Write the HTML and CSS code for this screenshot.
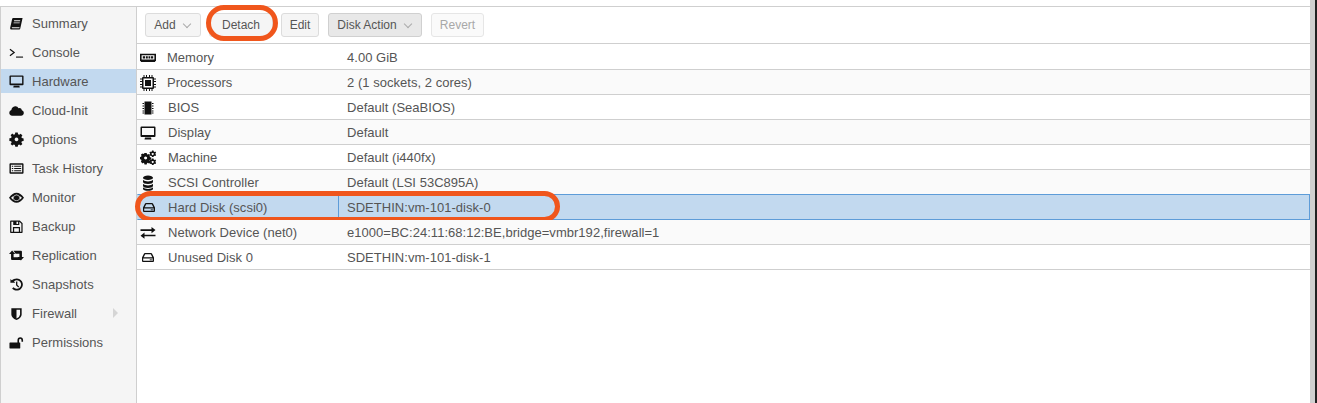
FILE: index.html
```html
<!DOCTYPE html>
<html lang="en">
<head>
<meta charset="utf-8">
<title>Hardware</title>
<link rel="stylesheet" href="styles.css">
</head>
<body>
<div class="page">
  <div class="frame">
    <nav class="side">
      <a class="nav"><svg class="ic" viewBox="0 0 16 16"><path d="M4.500 2h10l-.2 1-2.300 10.400q-.2.900-1.200.900H2.500Q1 14.300 1.200 12.700L3.400 3q.2-1 1.100-1zM5.500 4.500h6.500l-.2 1H5.300zM5 6.800h6.500l-.2 1H4.800zM3 12q-.2 1 .8 1H11l.3-1z" fill-rule="evenodd"/></svg><span>Summary</span></a>
      <a class="nav"><svg class="ic" viewBox="0 0 16 16"><path d="M1 4.500l4.500 3.500L1 11.500" fill="none" stroke="#111" stroke-width="1.300"/><path d="M7.500 12.300h7.500v1.200H7.500z"/></svg><span>Console</span></a>
      <a class="nav sel"><svg class="ic" viewBox="0 0 16 16"><path d="M1.500 1.500h13q1 0 1 1v8.500q0 1-1 1H1.500q-1 0-1-1V2.500q0-1 1-1zM2 3V10h12V3zM5 12.500h6l.5 2h-7z" fill-rule="evenodd"/></svg><span>Hardware</span></a>
      <a class="nav"><svg class="ic" viewBox="0 0 16 16"><path d="M3.500 13.500Q.3 13.500.3 10.500q0-2.300 2.200-3Q3 4 6.500 3.500q2.600-.2 3.700 2 3-.5 3.600 2.200 2 .6 2 2.800 0 3-3 3z"/></svg><span>Cloud-Init</span></a>
      <a class="nav"><svg class="ic" viewBox="0 0 16 16"><path d="M6.700 1.500h2.600l.4 1.900 1.200.5 1.600-1.100 1.800 1.800-1.100 1.600.5 1.200 1.900.4v2.600l-1.900.4-.5 1.200 1.100 1.600-1.800 1.800-1.600-1.100-1.200.5-.4 1.900H6.700l-.4-1.900-1.200-.5-1.600 1.100-1.800-1.800 1.100-1.600-.5-1.200-1.900-.4V7.600l1.900-.4.500-1.200L1.700 4.400l1.800-1.800 1.600 1.100 1.200-.5zM8 6.800a2 2 0 1 0 .01 0z" transform="translate(0 -.9)" fill-rule="evenodd"/></svg><span>Options</span></a>
      <a class="nav"><svg class="ic" viewBox="0 0 16 16"><path d="M1.500 2.500h13q1 0 1 1v9q0 1-1 1h-13q-1 0-1-1v-9q0-1 1-1zM2 4v8h12V4zM3 5h1.500v1.200H3zM5.500 5H13v1.200H5.500zM3 7.400h1.500v1.200H3zM5.500 7.400H13v1.200H5.500zM3 9.800h1.500V11H3zM5.500 9.800H13V11H5.500z" fill-rule="evenodd"/></svg><span>Task History</span></a>
      <a class="nav"><svg class="ic" viewBox="0 0 16 16"><path d="M0 8.300Q3.800 3 8 3t8 5.300Q12.200 13.600 8 13.600T0 8.300zM8 4.900a3.400 3.400 0 1 1-.01 0zM2.200 8.300q1.300 1.500 2.700 2.300-1.500-2.300 0-4.600-1.400.8-2.700 2.300zM11.100 6q1.500 2.300 0 4.600 1.400-.8 2.700-2.300-1.300-1.500-2.700-2.300z" fill-rule="evenodd"/><circle cx="8" cy="8.300" r="2.800"/></svg><span>Monitor</span></a>
      <a class="nav"><svg class="ic" viewBox="0 0 16 16"><path d="M2 1.500h9.500l3 3V14q0 .8-.8.800H2q-.8 0-.8-.8V2.300q0-.8.800-.8zM2.500 2.800v10.700h1.700V8.500h7.600v5h1.400V5L11 2.800v3.700H4.500V2.800zM5.500 9.800v3.700h5V9.800zM8 3v2.300h1.700V3z" fill-rule="evenodd"/></svg><span>Backup</span></a>
      <a class="nav"><svg class="ic" viewBox="0 0 16 16"><path d="M3.300 2.600 6.700 6.500H4.900v3.300H10l2.200 3H3.200q-1 0-1-1V6.500H0zM4.800 3h8q1 0 1 1v5.500H16l-3.300 3.900-3.400-3.900h1.800V6.100H7.100z"/></svg><span>Replication</span></a>
      <a class="nav"><svg class="ic" viewBox="0 0 16 16"><path d="M1.500 2.200l1.300 1.300Q5 1.500 8.300 1.500a6.500 6.500 0 1 1-5 10.700l1.500-1.400a4.500 4.500 0 1 0 .5-6l1.400 1.400H1.500zM7.500 4.800h1.400v3.500l2 2-1 1-2.400-2.400z" fill-rule="evenodd"/></svg><span>Snapshots</span></a>
      <a class="nav"><svg class="ic" viewBox="0 0 16 16"><path d="M2.500 2.500h11v6.500q0 3.500-5.500 6-5.500-2.500-5.500-6zM8 4v9.300q3.800-2 3.800-4.300V4z" fill-rule="evenodd"/></svg><span>Firewall</span><i class="arrow"></i></a>
      <a class="nav"><svg class="ic" viewBox="0 0 16 16"><path d="M1 8h8V5.500Q9 2.300 12 2.300t3 3.200v1.800h-1.700V5.500q0-1.600-1.300-1.600t-1.300 1.600V8h.8q.5 0 .5.500v5.300q0 .5-.5.500H1q-.5 0-.5-.5V8.500Q.5 8 1 8z"/></svg><span>Permissions</span></a>
    </nav>
    <main class="main">
      <div class="toolbar">
        <button class="btn w-add">Add<i class="caret"></i></button>
        <span class="ring-wrap"><button class="btn w-detach">Detach</button><span class="ring ring-btn"></span></span>
        <button class="btn w-edit">Edit</button>
        <button class="btn w-disk pressed">Disk Action<i class="caret"></i></button>
        <button class="btn w-revert off">Revert</button>
      </div>
      <div class="grid">
        <div class="row tight"><div class="name"><svg class="ic" viewBox="0 0 16 16"><path d="M0 3.800h16v7.200h-.8v1H.8v-1H0zM1.600 5.300v4.200h12.800V5.300zM2.800 6.200h2.400v2.400H2.800zM6 6.200h1.800v2.400H6zM8.500 6.200h1.800v2.400H8.500zM11 6.200h2.200v2.400H11z" fill-rule="evenodd"/></svg><span>Memory</span></div><div class="val">4.00 GiB</div></div>
        <div class="row tight"><div class="name"><svg class="ic" viewBox="0 0 16 16"><path d="M3 2h10q1 0 1 1v10q0 1-1 1H3q-1 0-1-1V3q0-1 1-1zM3.500 3.500v9h9v-9zM5 5h6v6H5zM3.500 0h1v2h-1zM6 0h1v2H6zM9 0h1v2H9zM11.500 0h1v2h-1zM3.500 14h1v2h-1zM6 14h1v2H6zM9 14h1v2H9zM11.500 14h1v2h-1zM0 3.500h2v1H0zM0 6h2v1H0zM0 9h2v1H0zM0 11.500h2v1H0zM14 3.500h2v1h-2zM14 6h2v1h-2zM14 9h2v1h-2zM14 11.500h2v1h-2z" fill-rule="evenodd"/></svg><span>Processors</span></div><div class="val">2 (1 sockets, 2 cores)</div></div>
        <div class="row"><div class="name"><svg class="ic" viewBox="0 0 16 16"><path d="M4.500 1.500h7v13h-7zM2.500 3h1.500v1H2.500zM2.500 5.500h1.500v1H2.500zM2.500 8h1.500v1H2.500zM2.500 10.500h1.500v1H2.500zM2.500 12.500h1.500v1H2.500zM12 3h1.500v1H12zM12 5.500h1.500v1H12zM12 8h1.500v1H12zM12 10.500h1.500v1H12zM12 12.500h1.500v1H12z"/></svg><span>BIOS</span></div><div class="val">Default (SeaBIOS)</div></div>
        <div class="row"><div class="name"><svg class="ic" viewBox="0 0 16 16"><path d="M1.500 1.500h13q1 0 1 1v8.500q0 1-1 1H1.500q-1 0-1-1V2.500q0-1 1-1zM2 3V10h12V3zM5 12.500h6l.5 2h-7z" fill-rule="evenodd"/></svg><span>Display</span></div><div class="val">Default</div></div>
        <div class="row"><div class="name"><svg class="ic" viewBox="0 0 16 16"><path d="M4.500 3h2.200l.3 1.200.9.400 1-.6 1.400 1.400-.6 1 .4.900 1.200.3v2.200l-1.200.3-.4.9.6 1-1.400 1.400-1-.6-.9.4-.3 1.200H4.500l-.3-1.200-.9-.4-1 .6L.9 11.400l.6-1-.4-.9L0 9.200V7l1.100-.3.4-.9-.6-1L2.300 3.400l1 .6.900-.4zM5.600 6.600a1.500 1.500 0 1 0 .01 0zM12 .5h1.500l.2.900.9.5.8-.4.8 1.200-.7.600v1l.7.600-.8 1.200-.8-.4-.9.500-.2.900H12l-.2-.9-.9-.5-.8.400-.7-1.200.6-.6v-1l-.6-.6.7-1.200.8.4.9-.5zM12.700 3a1 1 0 1 0 .01 0zM12 8.500h1.500l.2.900.9.5.8-.4.8 1.200-.7.600v1l.7.600-.8 1.200-.8-.4-.9.500-.2.900H12l-.2-.9-.9-.5-.8.400-.7-1.200.6-.6v-1l-.6-.6.7-1.200.8.4.9-.5zM12.700 11a1 1 0 1 0 .01 0z" fill-rule="evenodd"/></svg><span>Machine</span></div><div class="val">Default (i440fx)</div></div>
        <div class="row"><div class="name"><svg class="ic" viewBox="0 0 16 16"><path d="M8 .5c2.800 0 5 1 5 2.300S10.800 5 8 5 3 4.100 3 2.800 5.200.5 8 .5zM3 4.700C3.900 6 6 6.400 8 6.400s4.100-.4 5-1.700v2C13 8 10.800 9 8 9S3 8 3 6.700zM3 8.700c.9 1.300 3 1.700 5 1.700s4.100-.4 5-1.700v2C13 12 10.800 13 8 13s-5-1-5-2.300zM3 12.200c.9 1.300 3 1.700 5 1.700s4.100-.4 5-1.700v1.500C13 15 10.800 15.800 8 15.800S3 15 3 13.700z"/></svg><span>SCSI Controller</span></div><div class="val">Default (LSI 53C895A)</div></div>
        <div class="row selected"><div class="name"><svg class="ic" viewBox="0 0 16 16"><path d="M5 3h6q.8 0 1.100.7L14 7.500V11q0 1-1 1H3q-1 0-1-1V7.500l1.900-3.800Q4.200 3 5 3zM5.200 4.300 3.700 7.300h8.600l-1.500-3zM3.200 8.500v2.300h9.600V8.500zM9.800 9.200h1v1h-1zM11.300 9.200h1v1h-1z" fill-rule="evenodd"/></svg><span>Hard Disk (scsi0)</span></div><div class="val focus">SDETHIN:vm-101-disk-0</div><span class="ring ring-row"></span></div>
        <div class="row"><div class="name"><svg class="ic" viewBox="0 0 16 16"><path d="M.5 4.300h11V2l4 3.100-4 3.100V5.900H.5zM15.500 9.700h-11V7.600l-4 3.100 4 3.100v-2.500h11z"/></svg><span>Network Device (net0)</span></div><div class="val">e1000=BC:24:11:68:12:BE,bridge=vmbr192,firewall=1</div></div>
        <div class="row"><div class="name"><svg class="ic" viewBox="0 0 16 16"><path d="M5 3h6q.8 0 1.100.7L14 7.500V11q0 1-1 1H3q-1 0-1-1V7.500l1.900-3.800Q4.200 3 5 3zM5.200 4.300 3.700 7.300h8.600l-1.500-3zM3.200 8.500v2.300h9.600V8.500zM9.800 9.200h1v1h-1zM11.300 9.200h1v1h-1z" fill-rule="evenodd"/></svg><span>Unused Disk 0</span></div><div class="val">SDETHIN:vm-101-disk-1</div></div>
      </div>
    </main>
  </div>
  <div class="strip"></div>
  <div class="edge"></div>
</div>
</body>
</html>
```
FILE: styles.css
```css
* { box-sizing: border-box; }
html, body { margin: 0; height: 100%; overflow: hidden; background: #fff; }
body { font-family: "Liberation Sans", Arial, sans-serif; font-size: 13px; letter-spacing: .03px; color: #555; }
.page { display: flex; height: 403px; }
.frame { flex: 1; display: flex; padding-top: 6px; min-width: 0; }
.strip { width: 5px; background: #d0d0d0; }
.edge { width: 2px; background: #222; }
.ic { width: 16px; height: 16px; flex: none; fill: #111; }

.side { width: 137px; flex: none; background: #f5f5f5; border: 1px solid #cfcfcf; border-width: 1px 1px 0 1px; padding-top: 4px; }
.nav { display: flex; align-items: center; height: 24px; margin-bottom: 5px; padding-left: 8px; gap: 8px; position: relative; }
.nav .ic { width: 15px; height: 15px; }
.sel { background: #c2d9ef; }
.arrow { position: absolute; left: 112px; top: 7px; border: 5px solid transparent; border-left-color: #d5d5d5; border-right-width: 0; }

.main { flex: 1; min-width: 0; border-top: 1px solid #cfcfcf; }
.toolbar { display: flex; align-items: center; height: 37px; padding: 0 0 0 8px; gap: 8px; border-bottom: 1px solid #cfcfcf; }
.btn { height: 24px; padding: 0; font: 12px "Liberation Sans", Arial, sans-serif; color: #555; background: #f5f5f5; border: 1px solid #dcdcdc; border-radius: 3px; display: flex; align-items: center; justify-content: center; }
.w-add { width: 56px; }
.w-detach { width: 64px; }
.w-edit { width: 38px; }
.w-disk { width: 94px; margin-left: 1px; }
.w-revert { width: 53px; margin-left: 1px; }
.pressed { background: #e8e8e8; border-color: #d0d0d0; }
.off { background: #fafafa; color: #a8a8a8; border-color: #e6e6e6; }
.caret { width: 6px; height: 6px; margin: -3px 2px 0 8px; border: solid #aaa; border-width: 0 1px 1px 0; transform: rotate(45deg); }

.ring-wrap { position: relative; display: flex; }
.ring { position: absolute; border: 5px solid #f0561c; pointer-events: none; }
.ring-btn { left: -3px; right: -5px; top: -8px; bottom: -4px; border-radius: 18px; }
.ring-row { left: -3px; width: 425px; top: -4px; bottom: -3px; border-radius: 16px; }

.row { display: flex; align-items: center; height: 25px; padding-top: 1px; border-bottom: 1px solid #cfcfcf; position: relative; }
.row:first-child { height: 26px; padding-top: 2px; }
.row:nth-child(even) { background: #fafafa; }
.row.selected { background: #c2d9ef; border: 1px solid #5d9cd8; border-left-color: transparent; height: 26px; margin-top: -1px; padding-top: 1px; }
.name { width: 201px; flex: none; display: flex; align-items: center; gap: 12px; padding-left: 3px; height: 100%; }
.tight .name { gap: 11px; }
.selected .name { width: 200px; gap: 11px; padding-left: 3px; }
.val { flex: 1; padding-left: 9px; height: 100%; display: flex; align-items: center; }
.focus { border-left: 1px solid #5d9cd8; padding-left: 8px; }
```
